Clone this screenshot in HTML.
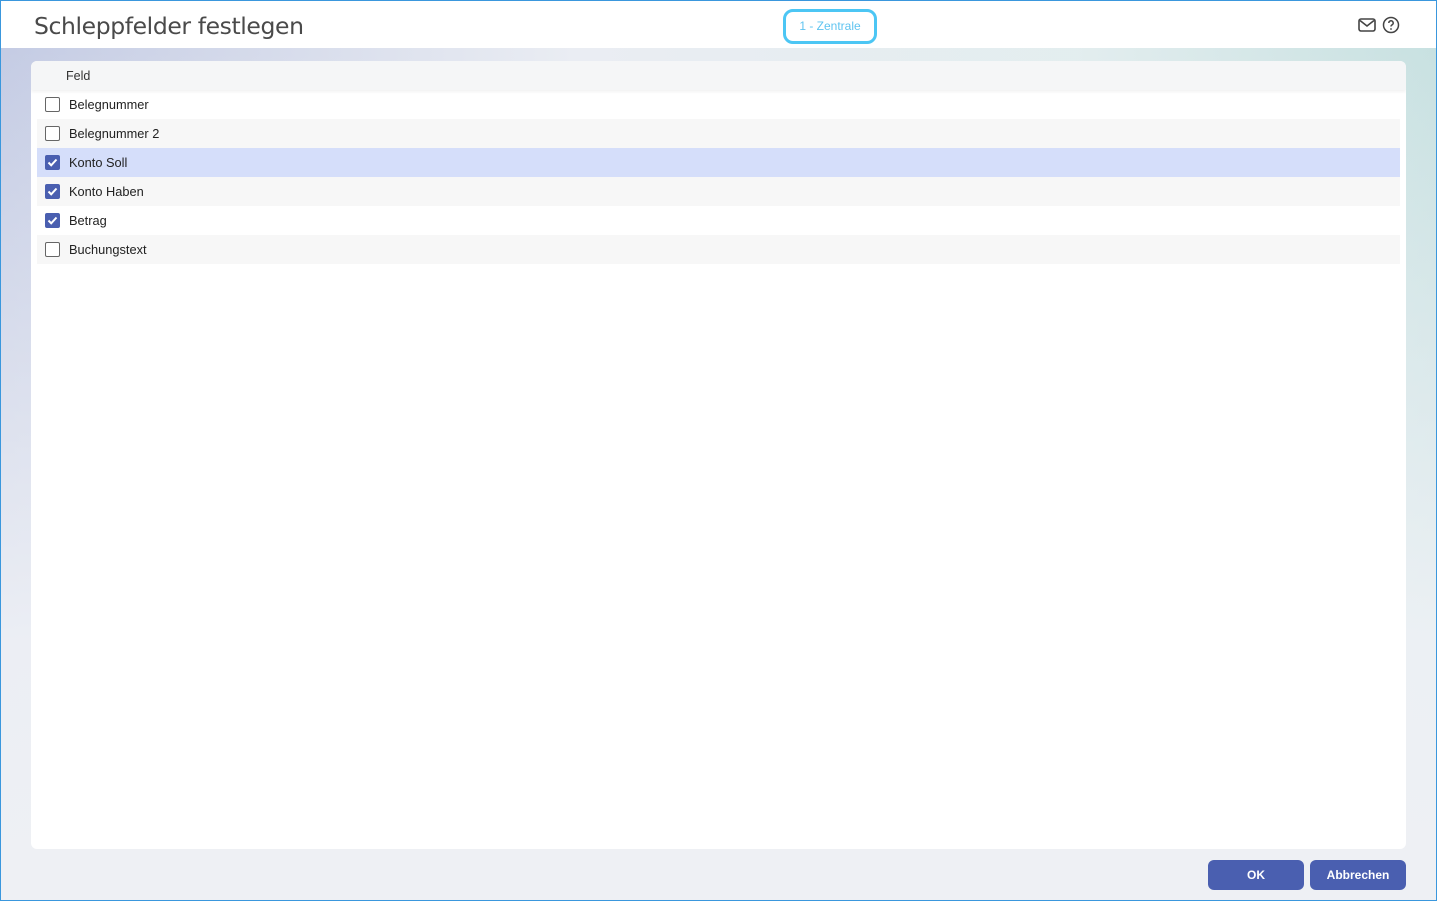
<!DOCTYPE html>
<html><head><meta charset="utf-8"><style>
*{box-sizing:border-box;margin:0;padding:0}
body{width:1437px;height:901px;overflow:hidden;font-family:"Liberation Sans",sans-serif;position:relative;background:#fff}
.frame{position:absolute;inset:0;border:1px solid #3a97dd;}
.hdr{position:absolute;left:1px;top:1px;right:1px;height:47px;background:#fff}
.title{position:absolute;left:33px;top:11px;font-size:23.5px;color:#4a4a4a;font-family:"DejaVu Sans","Liberation Sans",sans-serif;letter-spacing:-0.4px}
.badge{position:absolute;left:782px;top:8px;width:94px;height:35px;border:3px solid #4cc6f4;border-radius:10px;color:#5fc4f0;font-size:12px;text-align:center;line-height:29px}
.bg{position:absolute;left:1px;right:1px;top:48px;bottom:1px;background:linear-gradient(90deg,rgba(190,198,225,.9) 0%,rgba(220,225,235,.6) 40%,rgba(215,230,232,.7) 75%,rgba(200,225,225,1) 100%)}
.bg2{position:absolute;left:1px;right:1px;top:48px;bottom:1px;background:linear-gradient(180deg,rgba(255,255,255,0) 0%,rgba(240,242,246,.9) 70%,#eef0f4 100%)}
.panel{position:absolute;left:31px;top:61px;width:1375px;height:788px;background:#fff;border-radius:6px;overflow:hidden}
.th{height:29px;background:#f5f6f7;font-size:12.5px;color:#333;padding-left:35px;line-height:30px;box-shadow:0 2px 3px rgba(0,0,0,.05)}
.row{position:relative;margin-left:6px;width:1363px;height:29px;font-size:12.8px;color:#222;line-height:30px;padding-left:32px}
.row.alt{background:#f7f7f7}
.row.sel{background:#d5defa}
.cb{position:absolute;left:8px;top:7px;width:15px;height:15px;border:1px solid #666;border-radius:2px;background:#fff;display:block}
.cb svg{display:block;position:absolute;left:0;top:0}
.cb.on{background:#4a5fb0;border-color:#4a5fb0}
.btn{position:absolute;top:860px;height:30px;width:96px;background:#4a5fb0;color:#fff;border-radius:6px;font-size:12px;font-weight:bold;text-align:center;line-height:30px}
</style></head><body>
<div class="bg"></div><div class="bg2"></div>
<div class="hdr">
<div class="title">Schleppfelder festlegen</div>
<div class="badge">1 - Zentrale</div>
<svg style="position:absolute;left:1357px;top:16px" width="18" height="16" viewBox="0 0 18 16"><rect x="1" y="2" width="16" height="12" rx="2" fill="none" stroke="#444" stroke-width="1.6"/><path d="M2 3.5 L9 9 L16 3.5" fill="none" stroke="#444" stroke-width="1.6"/></svg>
<svg style="position:absolute;left:1381px;top:15px" width="18" height="18" viewBox="0 0 18 18"><circle cx="9" cy="9" r="7.5" fill="none" stroke="#444" stroke-width="1.5"/><path d="M6.8 7a2.2 2.2 0 1 1 3 2c-.6.3-.8.7-.8 1.5" fill="none" stroke="#444" stroke-width="1.5"/><circle cx="9" cy="13" r="0.9" fill="#444"/></svg>
</div>
<div class="panel">
<div class="th">Feld</div>
<div class="row"><span class="cb"></span>Belegnummer</div>
<div class="row alt"><span class="cb"></span>Belegnummer 2</div>
<div class="row sel"><span class="cb on"><svg width="13" height="13" viewBox="0 0 13 13"><path d="M2.5 6.5 L5.2 9.3 L10.5 3.5" fill="none" stroke="#fff" stroke-width="2"/></svg></span>Konto Soll</div>
<div class="row alt"><span class="cb on"><svg width="13" height="13" viewBox="0 0 13 13"><path d="M2.5 6.5 L5.2 9.3 L10.5 3.5" fill="none" stroke="#fff" stroke-width="2"/></svg></span>Konto Haben</div>
<div class="row"><span class="cb on"><svg width="13" height="13" viewBox="0 0 13 13"><path d="M2.5 6.5 L5.2 9.3 L10.5 3.5" fill="none" stroke="#fff" stroke-width="2"/></svg></span>Betrag</div>
<div class="row alt"><span class="cb"></span>Buchungstext</div>
</div>
<div class="btn" style="left:1208px">OK</div>
<div class="btn" style="left:1310px">Abbrechen</div>
<div class="frame"></div>
</body></html>
